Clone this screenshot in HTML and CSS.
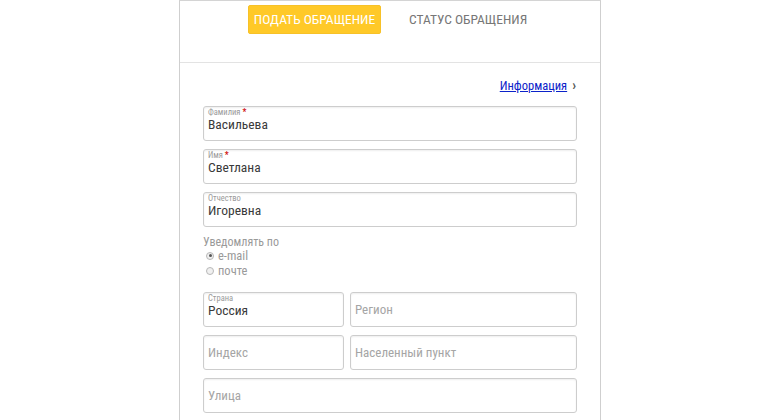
FILE: index.html
```html
<!DOCTYPE html>
<html lang="ru">
<head>
<meta charset="utf-8">
<link rel="stylesheet" href="styles.css">
</head>
<body>
<div class="frame">
  <div class="tabs">
    <span class="tab tab-active">ПОДАТЬ ОБРАЩЕНИЕ</span>
    <span class="tab">СТАТУС ОБРАЩЕНИЯ</span>
  </div>
  <div class="content">
    <div class="info-row"><a class="info-link" href="#">Информация</a><span class="chev">›</span></div>
    <div class="field">
      <span class="label">Фамилия <i class="req">*</i></span>
      <span class="value">Васильева</span>
    </div>
    <div class="field">
      <span class="label">Имя <i class="req">*</i></span>
      <span class="value">Светлана</span>
    </div>
    <div class="field">
      <span class="label">Отчество</span>
      <span class="value">Игоревна</span>
    </div>
    <div class="notify">
      <div class="notify-title">Уведомлять по</div>
      <div class="radio"><span class="dot dot-on"></span>e-mail</div>
      <div class="radio"><span class="dot"></span>почте</div>
    </div>
    <div class="row">
      <div class="field field-narrow">
        <span class="label">Страна</span>
        <span class="value">Россия</span>
      </div>
      <div class="field field-empty"><span class="ph">Регион</span></div>
    </div>
    <div class="row">
      <div class="field field-narrow field-empty"><span class="ph">Индекс</span></div>
      <div class="field field-empty"><span class="ph">Населенный пункт</span></div>
    </div>
    <div class="field field-empty"><span class="ph">Улица</span></div>
  </div>
</div>
</body>
</html>
```
FILE: styles.css
```css
html, body {
  margin: 0;
  padding: 0;
  background: #fff;
}
body {
  font-family: Roboto, "Liberation Sans", sans-serif;
  font-stretch: 75%;
}
.frame {
  width: 420px;
  height: 419px;
  margin: 0 auto;
  border: 1px solid #cfcfcf;
  border-top-color: #d4d4d4;
  overflow: hidden;
}
.tabs {
  box-sizing: border-box;
  height: 62px;
  border-bottom: 1px solid #e3e3e3;
  display: flex;
  justify-content: flex-start;
  align-items: flex-start;
  padding: 4px 0 0 68px;
}
.tab {
  font-size: 13.5px;
  font-weight: 400;
  color: #777;
  height: 29px;
  line-height: 29px;
  white-space: nowrap;
  margin-left: 28px;
}
.tab-active {
  background: #ffc928;
  color: #fff;
  border: 1px solid #f7c128;
  border-radius: 2px;
  box-sizing: border-box;
  width: 133px;
  line-height: 27px;
  text-align: center;
  margin-left: 0;
}
.content {
  padding: 13px 23px 0 23px;
}
.info-row {
  display: flex;
  justify-content: flex-end;
  align-items: center;
  height: 18px;
  margin-bottom: 12px;
  font-size: 12.5px;
}
.info-link {
  color: #0b22c9;
  text-decoration: underline;
}
.chev {
  color: #555;
  margin-left: 5px;
  margin-right: 1px;
  font-size: 14px;
  font-weight: 700;
}
.field {
  box-sizing: border-box;
  height: 35px;
  border: 1px solid #cdcdcd;
  border-radius: 3px;
  box-shadow: inset 0 1px 2px rgba(0,0,0,0.07);
  padding: 1px 4px 0 4px;
  margin-bottom: 8px;
  display: flex;
  flex-direction: column;
}
.label {
  font-size: 8.5px;
  line-height: 9px;
  color: #9a9a9a;
}
.req {
  color: #d01010;
  font-style: normal;
  font-weight: 700;
}
.value {
  font-size: 13.5px;
  line-height: 14px;
  color: #3a3a3a;
}
.field-empty {
  justify-content: center;
  padding-top: 0;
}
.ph {
  font-size: 13px;
  color: #a5a5a5;
}
.notify {
  padding: 0 0 14px 0;
  color: #9a9a9a;
}
.notify-title {
  font-size: 12px;
  line-height: 12px;
  padding-top: 1px;
}
.radio {
  display: flex;
  align-items: center;
  font-size: 12.5px;
  line-height: 15px;
  padding-left: 3px;
}
.dot {
  width: 6px;
  height: 6px;
  border: 1px solid #b8b8b8;
  border-radius: 50%;
  background: #f0f0f0;
  margin-right: 4px;
  box-sizing: content-box;
  display: inline-block;
  position: relative;
}
.dot-on::after {
  content: "";
  position: absolute;
  left: 1.5px;
  top: 1.5px;
  width: 3px;
  height: 3px;
  border-radius: 50%;
  background: #555;
}
.row {
  display: flex;
  gap: 6px;
}
.row .field {
  flex: 1;
}
.row .field-narrow {
  flex: 0 0 141px;
}
```
